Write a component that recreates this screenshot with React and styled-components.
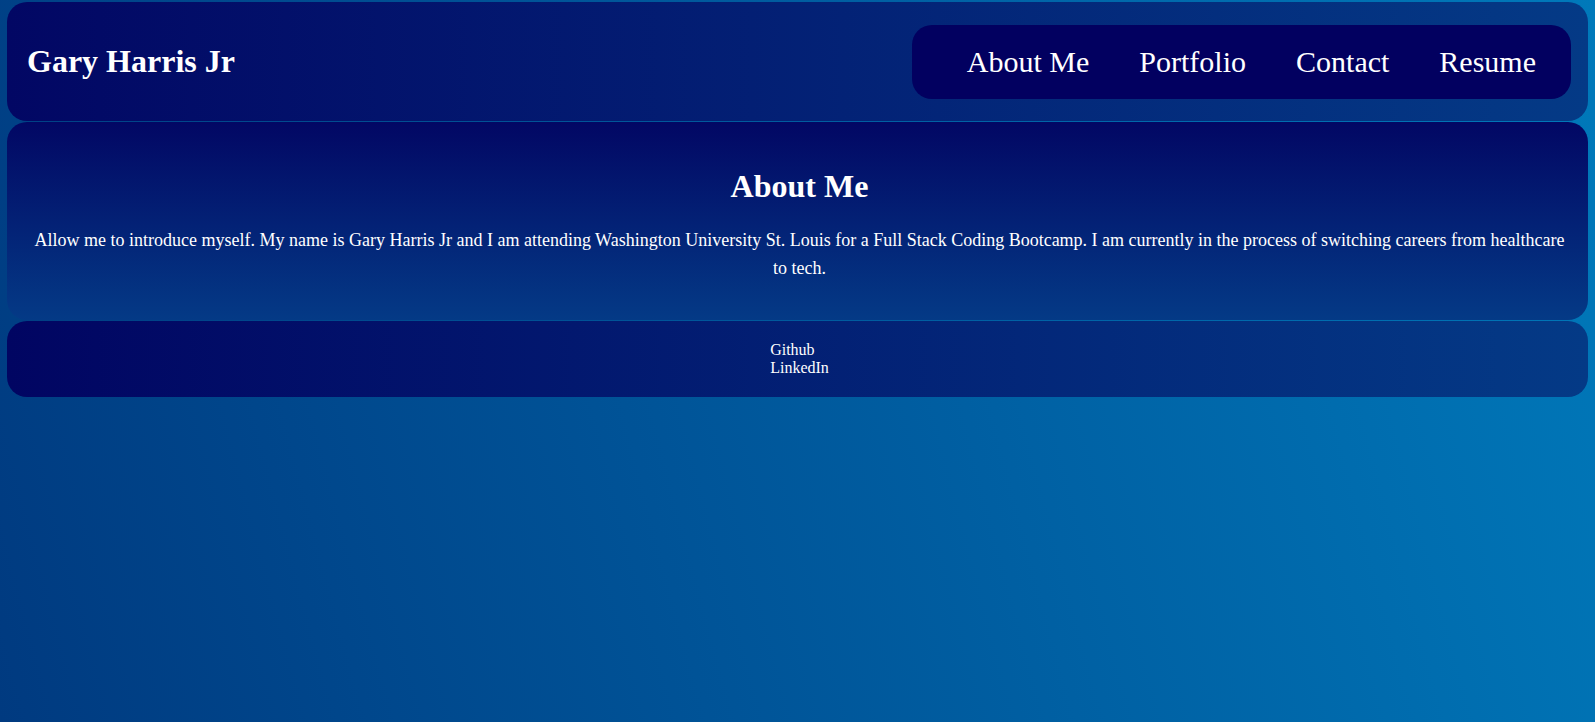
import React from "react";
import styled, { createGlobalStyle } from "styled-components";

const GlobalStyle = createGlobalStyle`
  html, body {
    margin: 0;
    padding: 0;
    min-height: 100vh;
  }
  body {
    background: linear-gradient(75deg, #003a80 0%, #0079ba 100%);
    background-attachment: fixed;
    font-family: "Liberation Serif", "Times New Roman", serif;
    color: #fff;
  }
`;

const Page = styled.div`
  display: flex;
  flex-direction: column;
  gap: 1px;
  padding: 2px 7px;
`;

const Header = styled.header`
  display: flex;
  align-items: center;
  justify-content: space-between;
  height: 119px;
  padding: 0 17px 0 20px;
  box-sizing: border-box;
  border-radius: 20px;
  background: linear-gradient(to right, #020764, #043a86);
`;

const Title = styled.h1`
  margin: 0;
  font-size: 32px;
  font-weight: bold;
`;

const Nav = styled.nav`
  display: flex;
  gap: 50px;
  padding: 20px 35px 20px 55px;
  border-radius: 20px;
  background: #020060;
`;

const NavLink = styled.a`
  font-size: 30px;
  color: #fff;
  text-decoration: none;
  cursor: pointer;
`;

const Section = styled.section`
  padding: 46px 22px 38px 26px;
  border-radius: 20px;
  background: linear-gradient(to bottom, #020764, #043a86);
  text-align: center;
`;

const Heading = styled.h2`
  margin: 0 0 21px;
  font-size: 32px;
  font-weight: bold;
`;

const Text = styled.p`
  margin: 0;
  font-size: 18px;
  line-height: 28px;
`;

const Footer = styled.footer`
  display: flex;
  justify-content: center;
  padding: 20px 0 21px 4px;
  border-radius: 20px;
  background: linear-gradient(to right, #010562, #043a86);
`;

const Links = styled.div`
  display: flex;
  flex-direction: column;
  font-size: 16px;
  line-height: 17.5px;
`;

const FooterLink = styled.a`
  color: #fff;
  text-decoration: none;
`;

const navItems = ["About Me", "Portfolio", "Contact", "Resume"];

export default function App() {
    return (
        <>
            <GlobalStyle />
            <Page>
                <Header>
                    <Title>Gary Harris Jr</Title>
                    <Nav>
                        {navItems.map((item) => (
                            <NavLink key={item}>{item}</NavLink>
                        ))}
                    </Nav>
                </Header>
                <Section>
                    <Heading>About Me</Heading>
                    <Text>
                        Allow me to introduce myself. My name is Gary Harris Jr and I am attending Washington
                        University St. Louis for a Full Stack Coding Bootcamp. I am currently in the process of
                        switching careers from healthcare to tech.
                    </Text>
                </Section>
                <Footer>
                    <Links>
                        <FooterLink>Github</FooterLink>
                        <FooterLink>LinkedIn</FooterLink>
                    </Links>
                </Footer>
            </Page>
        </>
    );
}
